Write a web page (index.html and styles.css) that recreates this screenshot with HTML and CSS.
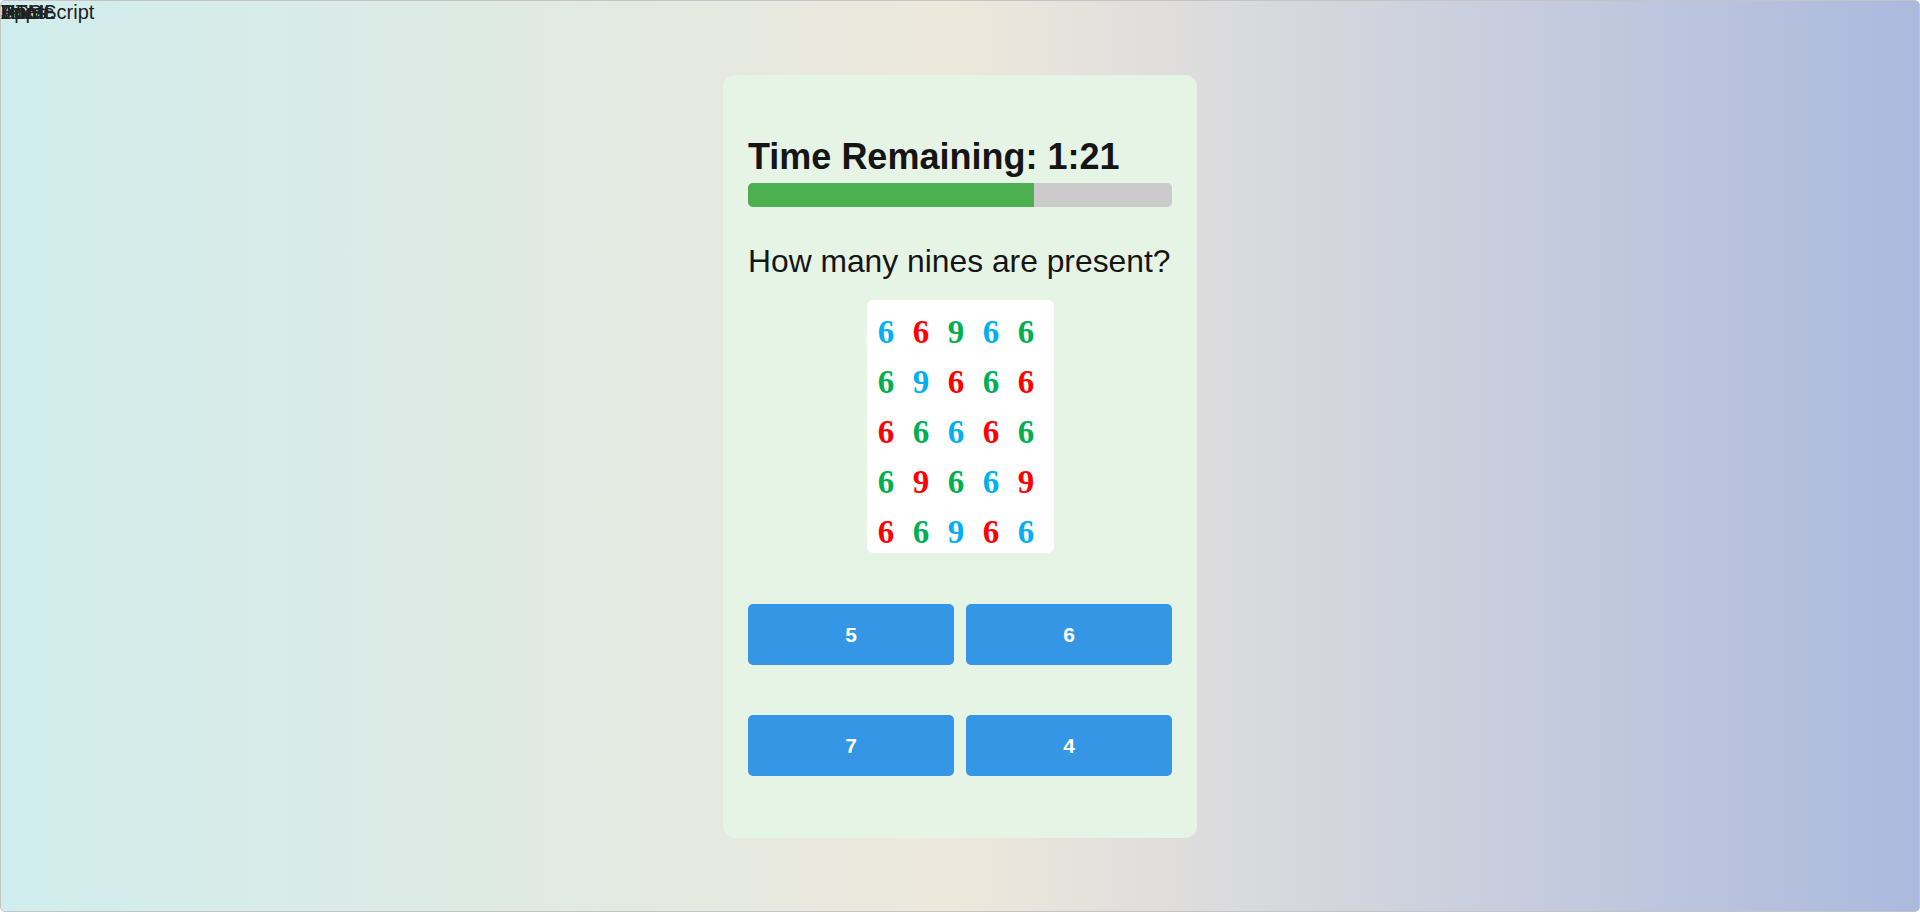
FILE: index.html
```html
<!DOCTYPE html>
<html lang="en">
<head>
<meta charset="utf-8">
<title>Counting Quiz</title>
<link rel="stylesheet" href="styles.css">
</head>
<body>
<div class="page">
  <div class="labels">
    <span class="label">HTML</span>
    <span class="label">CSS</span>
    <span class="label">Home</span>
    <span class="label">Apps</span>
    <span class="label">Vue</span>
    <span class="label">JavaScript</span>
  </div>
  <main class="card">
    <h2 class="timer">Time Remaining: 1:21</h2>
    <div class="bar"><div class="bar-fill" style="width:67.5%"></div></div>
    <p class="question">How many nines are present?</p>
    <div class="puzzle">
      <span class="d blue">6</span><span class="d red">6</span><span class="d green">9</span><span class="d blue">6</span><span class="d green">6</span>
      <span class="d green">6</span><span class="d blue">9</span><span class="d red">6</span><span class="d green">6</span><span class="d red">6</span>
      <span class="d red">6</span><span class="d green">6</span><span class="d blue">6</span><span class="d red">6</span><span class="d green">6</span>
      <span class="d green">6</span><span class="d red">9</span><span class="d green">6</span><span class="d blue">6</span><span class="d red">9</span>
      <span class="d red">6</span><span class="d green">6</span><span class="d blue">9</span><span class="d red">6</span><span class="d blue">6</span>
    </div>
    <div class="answers">
      <button class="answer">5</button>
      <button class="answer">6</button>
      <button class="answer">7</button>
      <button class="answer">4</button>
    </div>
  </main>
</div>
</body>
</html>
```

FILE: styles.css
```css
html, body {
  margin: 0;
  padding: 0;
}

body {
  font-family: "Liberation Sans", Arial, sans-serif;
  color: #111;
}

.page {
  position: relative;
  box-sizing: border-box;
  height: 912px;
  border: 1px solid #c4c4c4;
  border-radius: 5px;
  background: linear-gradient(to right, #d0eded 0%, #ede8dc 50%, #abb9de 100%);
  display: flex;
  justify-content: center;
  align-items: flex-start;
  padding-top: 74px;
}

.labels {
  position: absolute;
  left: 0;
  top: 0;
}

.label {
  position: absolute;
  left: 0;
  top: 0;
  font-size: 20px;
  line-height: 23px;
  color: #222;
  white-space: nowrap;
}

.card {
  box-sizing: border-box;
  width: 474px;
  height: 763px;
  padding: 25px;
  background: #e6f4e6;
  border-radius: 12px;
  display: flex;
  flex-direction: column;
  align-items: stretch;
}

.timer {
  margin: 36px 0 6px;
  font-size: 36px;
  line-height: 41px;
  font-weight: bold;
  color: #151515;
}

.bar {
  height: 24px;
  border-radius: 5px;
  background: #cbcbcb;
  overflow: hidden;
}

.bar-fill {
  height: 100%;
  background: #4caf50;
}

.question {
  margin: 36px 0 20px;
  font-size: 31.8px;
  line-height: 37px;
  white-space: nowrap;
  color: #151515;
}

.puzzle {
  align-self: center;
  box-sizing: border-box;
  width: 187px;
  height: 253px;
  padding: 7px 0 0 2px;
  background: #fff;
  border-radius: 6px;
  display: grid;
  grid-template-columns: repeat(5, 35px);
  grid-auto-rows: 50px;
  overflow: hidden;
}

.d {
  text-align: center;
  font-family: "Liberation Serif", "Times New Roman", serif;
  font-weight: bold;
  font-size: 33px;
  line-height: 50px;
}

.blue { color: #00b0f0; }
.red { color: #ff0000; }
.green { color: #00b050; }

.answers {
  margin-top: 51px;
  display: grid;
  grid-template-columns: 1fr 1fr;
  column-gap: 12px;
  row-gap: 50px;
}

.answer {
  height: 61px;
  border: none;
  border-radius: 5px;
  background: #3496e5;
  color: #fff;
  font-family: "Liberation Sans", Arial, sans-serif;
  font-weight: bold;
  font-size: 21px;
  padding: 0;
}
```
